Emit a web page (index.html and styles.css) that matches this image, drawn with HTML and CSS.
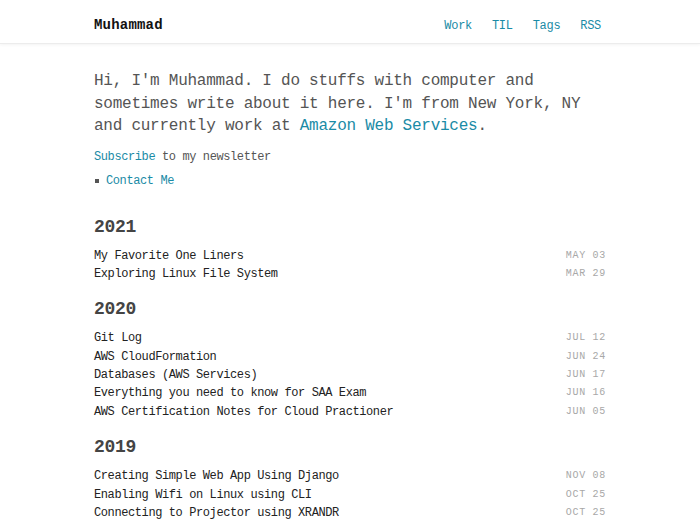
FILE: index.html
```html
<!DOCTYPE html>
<html lang="en">
<head>
<meta charset="utf-8">
<title>Muhammad</title>
<link rel="stylesheet" href="styles.css">
</head>
<body>
<header class="site-header">
  <div class="container header-inner">
    <a class="brand" href="#">Muhammad</a>
    <nav class="nav">
      <a href="#">Work</a>
      <a href="#">TIL</a>
      <a href="#">Tags</a>
      <a href="#">RSS</a>
    </nav>
  </div>
</header>
<main class="container main">
  <p class="intro">Hi, I'm Muhammad. I do stuffs with computer and sometimes write about it here. I'm from New York, NY and currently work at <a href="#">Amazon Web Services</a>.</p>
  <p class="subscribe"><a href="#">Subscribe</a> to my newsletter</p>
  <ul class="contact">
    <li><a href="#">Contact Me</a></li>
  </ul>

  <section class="year">
    <h2>2021</h2>
    <ul class="posts">
      <li><a href="#">My Favorite One Liners</a><span class="date">MAY 03</span></li>
      <li><a href="#">Exploring Linux File System</a><span class="date">MAR 29</span></li>
    </ul>
  </section>

  <section class="year">
    <h2>2020</h2>
    <ul class="posts">
      <li><a href="#">Git Log</a><span class="date">JUL 12</span></li>
      <li><a href="#">AWS CloudFormation</a><span class="date">JUN 24</span></li>
      <li><a href="#">Databases (AWS Services)</a><span class="date">JUN 17</span></li>
      <li><a href="#">Everything you need to know for SAA Exam</a><span class="date">JUN 16</span></li>
      <li><a href="#">AWS Certification Notes for Cloud Practioner</a><span class="date">JUN 05</span></li>
    </ul>
  </section>

  <section class="year">
    <h2>2019</h2>
    <ul class="posts">
      <li><a href="#">Creating Simple Web App Using Django</a><span class="date">NOV 08</span></li>
      <li><a href="#">Enabling Wifi on Linux using CLI</a><span class="date">OCT 25</span></li>
      <li><a href="#">Connecting to Projector using XRANDR</a><span class="date">OCT 25</span></li>
    </ul>
  </section>
</main>
</body>
</html>
```
FILE: styles.css
```css
* { box-sizing: border-box; }
html, body { margin: 0; padding: 0; background: #fff; }
body {
  font-family: "Liberation Mono", "DejaVu Sans Mono", monospace;
  color: #222;
}
a { text-decoration: none; color: #1a8ba6; }

.container {
  width: 512px;
  margin: 0 auto;
}

.site-header {
  height: 44px;
  border-bottom: 1px solid #ececec;
  box-shadow: 0 1px 3px rgba(0,0,0,0.05);
}
.header-inner {
  height: 100%;
  display: flex;
  align-items: center;
  justify-content: space-between;
  padding-top: 6px;
}
.brand {
  color: #111;
  font-weight: bold;
  font-size: 14px;
  letter-spacing: 0.2px;
  line-height: 18px;
}
.nav {
  display: flex;
  gap: 20px;
  margin-right: 5px;
  line-height: 18px;
  padding-top: 3px;
}
.nav a {
  font-size: 12px;
  letter-spacing: -0.3px;
}

.main { padding-top: 26px; }

.intro {
  margin: 0;
  font-size: 16px;
  letter-spacing: -0.25px;
  line-height: 22.5px;
  color: #555;
}

.subscribe {
  margin: 10px 0 0;
  font-size: 12px;
  letter-spacing: -0.4px;
  line-height: 18px;
  color: #555;
}

.contact {
  list-style: none;
  margin: 6px 0 0;
  padding: 0;
  font-size: 12px;
  letter-spacing: -0.4px;
  line-height: 18px;
}
.contact li {
  display: flex;
  align-items: center;
  gap: 7px;
}
.contact li::before {
  content: "";
  width: 4px;
  height: 4px;
  margin-left: 1px;
  background: #555;
}

.year h2 {
  margin: 12px 0 6px;
  font-size: 18px;
  letter-spacing: -0.3px;
  line-height: 28px;
  font-weight: bold;
  color: #444;
}
.year:first-of-type h2 { margin-top: 23px; }

.posts {
  list-style: none;
  margin: 0;
  padding: 0;
}
.posts li {
  display: flex;
  justify-content: space-between;
  align-items: center;
  height: 18.4px;
  line-height: 18.4px;
}
.posts a {
  color: #222;
  font-size: 12px;
  letter-spacing: -0.4px;
}
.date {
  font-size: 10px;
  letter-spacing: 0.7px;
  color: #a8a8a8;
}
```
